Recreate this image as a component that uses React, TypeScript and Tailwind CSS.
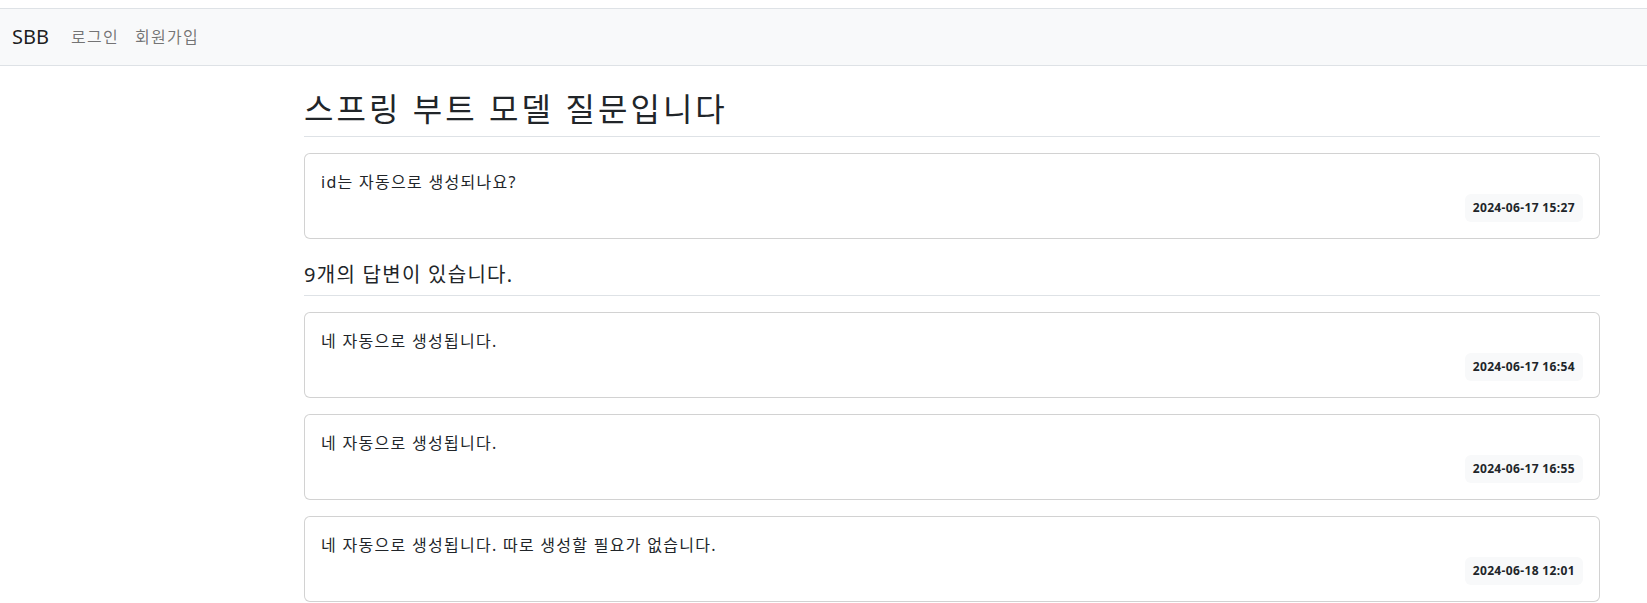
import React from 'react';

interface Answer {
    content: string;
    createDate: string;
}

const question = {
    subject: '스프링 부트 모델 질문입니다',
    content: 'id는 자동으로 생성되나요?',
    createDate: '2024-06-17 15:27',
};

const answers: Answer[] = [
    { content: '네 자동으로 생성됩니다.', createDate: '2024-06-17 16:54' },
    { content: '네 자동으로 생성됩니다.', createDate: '2024-06-17 16:55' },
    { content: '네 자동으로 생성됩니다. 따로 생성할 필요가 없습니다.', createDate: '2024-06-18 12:01' },
];

const Card: React.FC<{ content: string; createDate: string }> = ({ content, createDate }) => (
    <div className="mt-4 border border-black/[0.175] rounded-md bg-white">
        <div className="p-4">
            <div className="leading-6 whitespace-pre-line">{content}</div>
            <div className="flex justify-end">
                <div className="bg-[#f8f9fa] text-[12px] font-bold leading-3 p-2 rounded-md tracking-[0.03em]">
                    {createDate}
                </div>
            </div>
        </div>
    </div>
);

export default function App() {
    return (
        <div className="min-h-screen bg-white text-[#212529] text-base leading-6 tracking-[0.08em] font-['Noto_Sans','Noto_Sans_CJK_KR',sans-serif]">
            <div className="h-2" />
            {/* navbar */}
            <nav className="border-t border-b border-[#dee2e6] bg-[#f8f9fa]">
                <div className="h-14 px-3 flex items-center">
                    <a href="#" className="text-[20px] leading-[30px] py-[5px] mr-[14px] text-black/90 tracking-normal">SBB</a>
                    <a href="#" className="px-2 py-2 text-black/55">로그인</a>
                    <a href="#" className="px-2 py-2 text-black/55">회원가입</a>
                </div>
            </nav>

            <div className="ml-[292px] w-[1320px] px-3 pt-4">
                <h2 className="py-2 border-b border-[#dee2e6] text-[32px] leading-[38px] font-normal tracking-[0.095em]">
                    {question.subject}
                </h2>
                <Card content={question.content} createDate={question.createDate} />

                <h5 className="mt-4 py-2 border-b border-[#dee2e6] text-[20px] leading-6 font-normal">
                    9개의 답변이 있습니다.
                </h5>
                {answers.map((a, i) => (
                    <Card key={i} content={a.content} createDate={a.createDate} />
                ))}
            </div>
        </div>
    );
}
